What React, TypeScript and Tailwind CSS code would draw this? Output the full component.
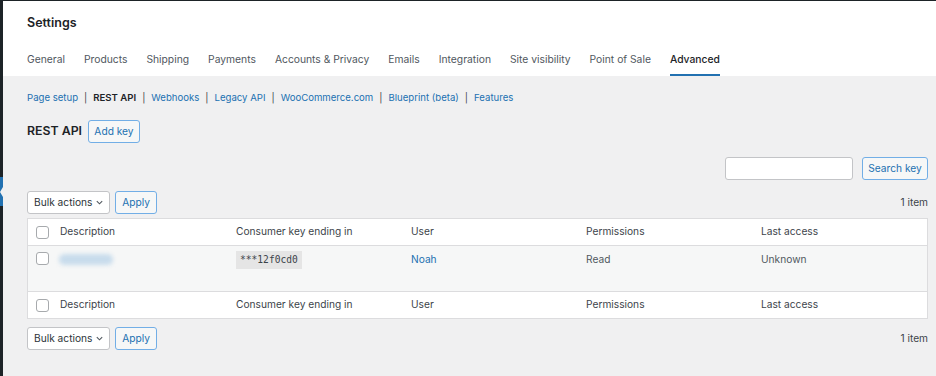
import React from 'react';

const tabs = [
  'General',
  'Products',
  'Shipping',
  'Payments',
  'Accounts & Privacy',
  'Emails',
  'Integration',
  'Site visibility',
  'Point of Sale',
  'Advanced',
];

const subLinks = ['Page setup', 'REST API', 'Webhooks', 'Legacy API', 'WooCommerce.com', 'Blueprint (beta)', 'Features'];

const cols = 'grid grid-cols-[32px_176px_175px_175px_175px_1fr] items-center';

const Checkbox: React.FC = () => (
  <span className="block w-[13px] h-[13px] rounded-[3px] border border-[#a7aaad] bg-white ml-[8px]" />
);

const BulkBar: React.FC = () => (
  <div className="flex items-center justify-between">
    <div className="flex items-center gap-[5px]">
      <div className="h-[23px] w-[83px] flex items-center justify-between pl-[6px] pr-[5px] bg-white border border-[#c3c4c7] rounded-[3px] text-[10.2px] text-[#2c3338] whitespace-nowrap">
        <span>Bulk actions</span>
        <svg width="9" height="9" viewBox="0 0 10 10" fill="none" stroke="#50575e" strokeWidth="1.2">
          <path d="M2 3.5l3 3 3-3" />
        </svg>
      </div>
      <div className="h-[23px] w-[42px] flex items-center justify-center bg-[#f6f7f7] border border-[#72aee6] rounded-[3px] text-[10.2px] text-[#2271b1]">
        Apply
      </div>
    </div>
    <span className="text-[10.2px] text-[#3c434a]">1 item</span>
  </div>
);

const HeaderRow: React.FC<{ top?: boolean }> = ({ top }) => (
  <div className={`${cols} h-[27px] bg-white text-[10.2px] text-[#3c434a] ${top ? 'border-b' : 'border-t'} border-[#dcdcde]`}>
    <Checkbox />
    <span>Description</span>
    <span>Consumer key ending in</span>
    <span>User</span>
    <span>Permissions</span>
    <span>Last access</span>
  </div>
);

export default function App() {
  return (
    <div className="w-[936px] h-[376px] flex bg-[#f0f0f1] overflow-hidden" style={{ fontFamily: 'Inter, "Liberation Sans", sans-serif' }}>
      {/* admin menu edge */}
      <div className="w-[3px] shrink-0 bg-[#1d2327] flex flex-col">
        <div className="h-[177px]" />
        <div className="h-[29px] bg-[#2271b1] flex items-center">
          <div className="w-0 h-0 border-y-[5px] border-y-transparent border-r-[3px] border-r-[#f0f0f1]" />
        </div>
      </div>

      <div className="flex-1 flex flex-col">
        <div className="h-[1px] bg-[#1d2327]" />
        <header className="bg-white pl-[24px]">
          <div className="h-[44px] flex items-center text-[12.5px] font-semibold text-[#1d2327]">Settings</div>
          <nav className="flex gap-[19px] text-[10.3px] text-[#50575e]">
            {tabs.map((t) => (
              <span
                key={t}
                className={`h-[31px] flex items-center pt-[1px] border-b-[2px] ${t === 'Advanced' ? 'border-[#2271b1] text-[#1d2327] font-medium' : 'border-transparent'}`}
              >
                {t}
              </span>
            ))}
          </nav>
        </header>

        <main className="pl-[24px] pr-[8px] flex flex-col">
          <div className="h-[44px] flex items-center text-[9.6px] text-[#2271b1] pt-[1px] whitespace-nowrap">
            {subLinks.map((l, i) => (
              <React.Fragment key={l}>
                {i > 0 && <span className="text-[#3c434a] mx-[6px]">|</span>}
                <span className={l === 'REST API' ? 'font-semibold text-[#1d2327]' : ''}>{l}</span>
              </React.Fragment>
            ))}
          </div>

          <div className="flex items-center gap-[6px] h-[23px]">
            <h1 className="text-[12.3px] font-semibold text-[#1d2327]">REST API</h1>
            <div className="h-[23px] w-[52px] flex items-center justify-center bg-[#f6f7f7] border border-[#72aee6] rounded-[3px] text-[10.2px] text-[#2271b1]">
              Add key
            </div>
          </div>

          <div className="flex justify-end items-center gap-[9px] mt-[14px]">
            <div className="w-[128px] h-[23px] bg-white border border-[#c3c4c7] rounded-[3px]" />
            <div className="h-[23px] w-[66px] flex items-center justify-center bg-[#f6f7f7] border border-[#72aee6] rounded-[3px] text-[10.2px] text-[#2271b1]">
              Search key
            </div>
          </div>

          <div className="mt-[11px]">
            <BulkBar />
          </div>

          <div className="mt-[4px] border border-[#dcdcde] bg-white">
            <HeaderRow top />
            <div className={`${cols} items-start h-[45px] bg-[#f6f7f7] text-[10.2px] text-[#50575e] pt-[6px]`}>
              <Checkbox />
              <div className="h-[11px] w-[54px] mt-[2px] -ml-[1px] rounded-full bg-[#c8dcec] blur-[2px]" />
              <span className="justify-self-start bg-[#e5e5e5] px-[4px] py-[2px] -mt-[1px] text-[9.6px] text-[#3c434a]" style={{ fontFamily: '"DejaVu Sans Mono", monospace' }}>
                ***12f0cd0
              </span>
              <span className="text-[#2271b1]">Noah</span>
              <span>Read</span>
              <span>Unknown</span>
            </div>
            <HeaderRow />
          </div>

          <div className="mt-[8px]">
            <BulkBar />
          </div>
        </main>
      </div>
    </div>
  );
}
